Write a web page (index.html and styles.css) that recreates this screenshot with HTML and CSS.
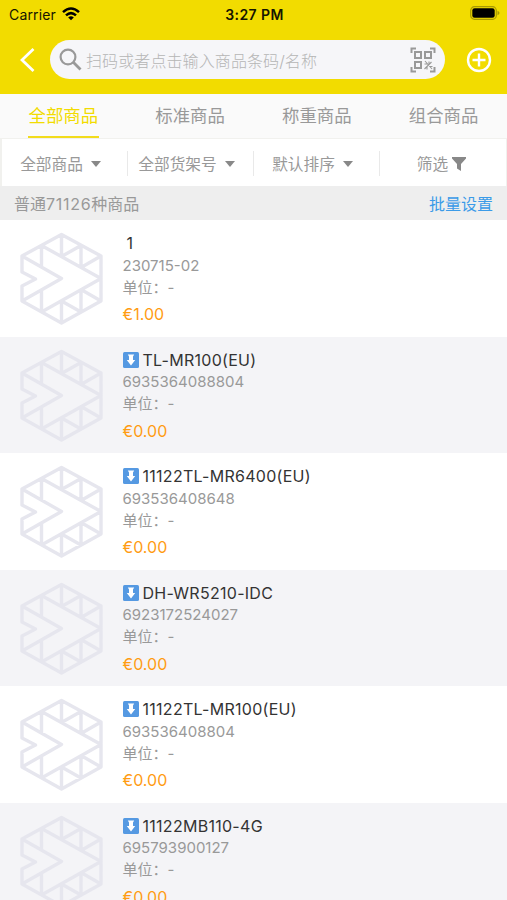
FILE: index.html
```
<!DOCTYPE html>
<html lang="zh-CN">

<head>
    <meta charset="UTF-8">
    <meta name="viewport" content="width=device-width, initial-scale=1.0">
    <title>商品列表</title>
    <link rel="stylesheet" href="styles.css">
</head>

<body>
    <!-- shared icons -->
    <svg class="defs" width="0" height="0">
        <symbol id="placeholder" viewBox="0 0 84 94">
            <path d="M2 24 41.500 2.500 81 24V69L41.500 91 2 69V54L15.500 47 2 40Z M21.500 13.500 81 46.500 21.500 80 M2 24 41.500 46.500 2 69 M21.500 13.500V35 M21.500 80V58 M41.500 2.500V24.500 M41.500 91V69 M61 13.500V35.500 M61 80V57.500 M41.500 24.500 61 13.500 M61 35.500 81 24 M41.500 69 61 80 M61 57.500 81 69" />
        </symbol>
        <symbol id="down" viewBox="0 0 16 16">
            <rect width="16" height="16" rx="1.500" fill="#5599e2" />
            <path d="M4.800 2.500h6.400l-1.200 2v3.500h2.200L8 13.500 3.800 8h2.200V4.500Z" fill="#fff" />
        </symbol>
    </svg>

    <header class="header">
        <div class="status">
            <div class="carrier">
                <span>Carrier</span>
                <svg width="18" height="14" viewBox="0 0 18 14" fill="none" stroke="#000" stroke-width="2.500">
                    <path d="M1 5.200Q9-2.200 17 5.200M4 8.400Q9 3.800 14 8.400" />
                    <path d="M9 13.300 6.200 10.400Q9 8.200 11.800 10.400Z" fill="#000" stroke="none" />
                </svg>
            </div>
            <strong class="time">3:27 PM</strong>
            <svg class="battery" width="30" height="14" viewBox="0 0 30 14">
                <rect x=".7" y=".7" width="25.600" height="12.600" rx="3.800" fill="none" stroke="#a89a00" stroke-width="1.200" />
                <rect x="2.300" y="2.300" width="22.400" height="9.400" rx="2.300" />
                <path d="M27.500 4.700q2 .8 2 2.300t-2 2.300Z" fill="#a89a00" />
            </svg>
        </div>
        <div class="nav">
            <svg class="back" width="15" height="26" viewBox="0 0 15 26" fill="none" stroke="#fff" stroke-width="2.800">
                <path d="M13.500 2 2 13 13.500 24" />
            </svg>
            <div class="search">
                <svg width="23" height="23" viewBox="0 0 23 23" fill="none" stroke="#999">
                    <circle cx="9" cy="9" r="7.400" stroke-width="2.200" />
                    <path d="M14.300 14.300 21.500 21.500" stroke-width="2.800" />
                </svg>
                <span class="hint">扫码或者点击输入商品条码/名称</span>
                <svg class="scan" width="26" height="26" viewBox="0 0 26 26" fill="none" stroke="#999" stroke-width="2">
                    <path d="M1.500 6V1.500H6M20 1.500H24.500V6M24.500 20V24.500H20M6 24.500H1.500V20" />
                    <path d="M5 5h6v6H5ZM15 5h6v6H15ZM5 15h6v6H5Z" stroke-width="2" />
                    <path d="M14.500 17h3M19 14.500v3M17 19.500v3M19.500 19.500h3M15 14l7 8M21.500 15l-7 7" stroke-width="1.100" />
                </svg>
            </div>
            <svg class="add" width="26" height="26" viewBox="0 0 26 26" fill="none" stroke="#fff" stroke-width="2.400">
                <circle cx="13" cy="13" r="11" />
                <path d="M13 6.500v13M6.500 13h13" />
            </svg>
        </div>
    </header>

    <nav class="tabs">
        <div class="tab active"><span>全部商品</span></div>
        <div class="tab"><span>标准商品</span></div>
        <div class="tab"><span>称重商品</span></div>
        <div class="tab"><span>组合商品</span></div>
    </nav>

    <div class="filters">
        <div class="filter">全部商品<i class="caret"></i></div>
        <div class="filter">全部货架号<i class="caret"></i></div>
        <div class="filter">默认排序<i class="caret"></i></div>
        <div class="filter last">筛选<svg width="14" height="14" viewBox="0 0 14 14" fill="#888">
                <path d="M0 0h14v1.500L9 7v7l-4-2.500V7L0 1.500Z" />
            </svg></div>
    </div>

    <div class="summary">
        <span>普通<span class="count">71126</span>种商品</span>
        <a class="batch">批量设置</a>
    </div>

    <main class="list">
        <div class="item">
            <svg class="thumb"><use href="#placeholder" /></svg>
            <div class="info">
                <div class="name plain">1</div>
                <div class="code">230715-02</div>
                <div class="unit">单位：<span>-</span></div>
                <div class="price">€1.00</div>
            </div>
        </div>
        <div class="item">
            <svg class="thumb"><use href="#placeholder" /></svg>
            <div class="info">
                <div class="name"><svg class="mark"><use href="#down" /></svg>TL-MR100(EU)</div>
                <div class="code">6935364088804</div>
                <div class="unit">单位：<span>-</span></div>
                <div class="price">€0.00</div>
            </div>
        </div>
        <div class="item">
            <svg class="thumb"><use href="#placeholder" /></svg>
            <div class="info">
                <div class="name"><svg class="mark"><use href="#down" /></svg>11122TL-MR6400(EU)</div>
                <div class="code">693536408648</div>
                <div class="unit">单位：<span>-</span></div>
                <div class="price">€0.00</div>
            </div>
        </div>
        <div class="item">
            <svg class="thumb"><use href="#placeholder" /></svg>
            <div class="info">
                <div class="name"><svg class="mark"><use href="#down" /></svg>DH-WR5210-IDC</div>
                <div class="code">6923172524027</div>
                <div class="unit">单位：<span>-</span></div>
                <div class="price">€0.00</div>
            </div>
        </div>
        <div class="item">
            <svg class="thumb"><use href="#placeholder" /></svg>
            <div class="info">
                <div class="name"><svg class="mark"><use href="#down" /></svg>11122TL-MR100(EU)</div>
                <div class="code">693536408804</div>
                <div class="unit">单位：<span>-</span></div>
                <div class="price">€0.00</div>
            </div>
        </div>
        <div class="item">
            <svg class="thumb"><use href="#placeholder" /></svg>
            <div class="info">
                <div class="name"><svg class="mark"><use href="#down" /></svg>11122MB110-4G</div>
                <div class="code">695793900127</div>
                <div class="unit">单位：<span>-</span></div>
                <div class="price">€0.00</div>
            </div>
        </div>
    </main>
</body>

</html>
```
FILE: styles.css
```
* {
    box-sizing: border-box;
}

body {
    display: flex;
    flex-direction: column;
    height: 100vh;
    margin: 0;
    overflow: hidden;
    background: white;
    color: #999;
    font-family: Inter, "Noto Sans CJK SC", sans-serif;
}

svg {
    display: block;
    flex: none;
}

.defs {
    height: 0;
}
/* Header */

.header {
    flex: none;
    height: 94px;
    background: #f2dc00;
}

.status {
    display: grid;
    grid-template-columns: 1fr auto 1fr;
    align-items: center;
    height: 28px;
    padding: 0 7px 0 9px;
    color: #151500;
    font-size: 14px;
}

.carrier {
    display: flex;
    align-items: center;
    gap: 6px;
    letter-spacing: 0.15px;
}

.time {
    font-weight: 600;
    letter-spacing: 0.4px;
}

.battery {
    justify-self: end;
    margin-top: -2px;
}

.nav {
    display: flex;
    align-items: center;
    height: 40px;
    margin-top: 12px;
    padding: 0 15px 0 20px;
}

.back,
.add {
    margin-top: -1px;
}

.search {
    display: flex;
    flex: 1;
    align-items: center;
    height: 39px;
    margin: -1px 21px 0 15px;
    padding: 0 9px;
    border-radius: 20px;
    background: #f6f6f9;
}

.hint {
    margin-left: 4px;
    color: #b5b5b5;
    font-size: 16px;
    font-weight: 300;
    letter-spacing: 0.1px;
    white-space: nowrap;
}

.scan {
    margin-left: auto;
}
/* Tabs */

.tabs {
    display: grid;
    flex: none;
    grid-template-columns: repeat(4, 1fr);
    height: 45px;
    border-bottom: 1px solid #f1f1ee;
    background: #fafafa;
    font-size: 17.4px;
}

.tab {
    display: flex;
    justify-content: center;
}

.tab span {
    height: 44px;
    padding: 0 1px;
    line-height: 43px;
}

.tab.active span {
    border-bottom: 2px solid #f2dc1c;
    color: #f2dc00;
}
/* Filters */

.filters {
    display: grid;
    flex: none;
    grid-template-columns: repeat(4, 1fr);
    align-items: center;
    height: 47px;
    padding-top: 2px;
    border-left: 2px solid #f1f1ee;
    border-right: 1px solid #f1f1ee;
    font-size: 15.7px;
}

.filter {
    display: flex;
    align-items: center;
    justify-content: center;
    height: 25px;
    border-right: 1px solid #e9e9e9;
    padding-right: 8px;
    white-space: nowrap;
}

.filter.last {
    gap: 4px;
    padding-right: 3px;
    border: none;
}

.caret {
    margin: 1px 0 0 8px;
    border: 5px solid transparent;
    border-top: 6px solid #888;
    border-bottom: none;
}

.summary {
    display: flex;
    flex: none;
    align-items: center;
    justify-content: space-between;
    height: 34px;
    padding: 0 14px;
    background: #eee;
    font-size: 16px;
}

.count {
    letter-spacing: 0.7px;
}

.batch {
    color: #3b9be8;
}
/* Product list */

.list {
    flex: 1;
    min-height: 0;
    overflow: hidden;
}

.item {
    display: flex;
    height: 116.5px;
    padding: 12px 20px 0;
    background: white;
}

.item:nth-child(even) {
    background: #f4f4f7;
}

.thumb {
    width: 84px;
    height: 94px;
    fill: none;
    stroke: #e6e6ee;
    stroke-width: 3.4;
    stroke-linejoin: round;
}

.info {
    margin-left: 18.5px;
    font-size: 15px;
    line-height: 22px;
    white-space: nowrap;
}

.name {
    display: flex;
    align-items: center;
    gap: 4px;
    height: 23px;
    margin-top: -0.5px;
    color: #333;
    font-size: 16px;
    letter-spacing: 0.28px;
}

.name.plain {
    padding-left: 4px;
}

.mark {
    width: 16px;
    height: 16px;
}

.price {
    margin-top: 4.5px;
    color: #ff9c13;
    font-size: 16px;
}
```
